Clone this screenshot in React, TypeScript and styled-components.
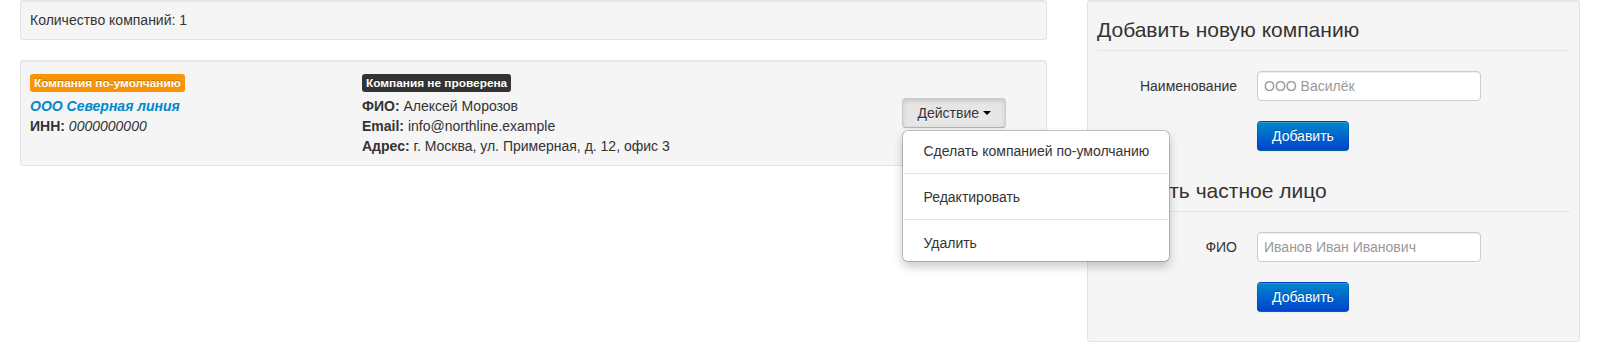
import React from "react";
import styled, { createGlobalStyle, css } from "styled-components";

const GlobalStyle = createGlobalStyle`
  html, body {
    margin: 0;
    padding: 0;
    background: #fff;
  }
  body {
    font-family: "Liberation Sans", Arial, Helvetica, sans-serif;
    font-size: 14px;
    line-height: 20px;
    color: #333;
  }
  * { box-sizing: border-box; }
`;

const Page = styled.div`
  display: flex;
  align-items: flex-start;
  gap: 40px;
  padding: 0 20px;
`;

const MainColumn = styled.div`
  width: 1027px;
  flex-shrink: 0;
`;

const Sidebar = styled.div`
  width: 493px;
  flex-shrink: 0;
`;

const Well = styled.div`
  background: #f5f5f5;
  border: 1px solid #e3e3e3;
  border-radius: 3px;
  padding: 9px;
  margin-bottom: 20px;
  box-shadow: inset 0 1px 1px rgba(0, 0, 0, 0.05);
`;

const CompanyRow = styled.div`
  display: grid;
  grid-template-columns: 332px 1fr auto;
  align-items: start;
`;

const Column = styled.div`
  display: flex;
  flex-direction: column;
`;

const BadgeRow = styled.div`
  display: flex;
  align-items: flex-start;
  height: 26px;
  padding-top: 4px;
`;

const Label = styled.span<{ $tone: "warning" | "inverse" }>`
  display: inline-block;
  padding: 2px 4px;
  font-size: 11.844px;
  font-weight: bold;
  line-height: 14px;
  color: #fff;
  white-space: nowrap;
  border-radius: 3px;
  text-shadow: 0 -1px 0 rgba(0, 0, 0, 0.25);
  background-color: ${(p) => (p.$tone === "warning" ? "#f89406" : "#333333")};
`;

const Line = styled.div`
  line-height: 20px;
  white-space: nowrap;
`;

const CompanyName = styled.a`
  color: #0088cc;
  font-weight: bold;
  font-style: italic;
  text-decoration: none;
`;

const Value = styled.em`
  font-style: italic;
`;

const ActionCell = styled.div`
  align-self: center;
  margin-right: 31px;
`;

const BtnGroup = styled.div`
  position: relative;
  display: inline-block;
`;

const Button = styled.button<{ $variant?: "default" | "primary"; $open?: boolean }>`
  display: inline-block;
  padding: 4px 14px;
  font-family: inherit;
  font-size: 14px;
  line-height: 20px;
  border-radius: 4px;
  cursor: pointer;
  ${(p) =>
    p.$variant === "primary"
      ? css`
          color: #fff;
          text-shadow: 0 -1px 0 rgba(0, 0, 0, 0.25);
          background-color: #006dcc;
          background-image: linear-gradient(to bottom, #0088cc, #0044cc);
          border: 1px solid rgba(0, 0, 0, 0.1);
          border-bottom-color: rgba(0, 0, 0, 0.25);
          box-shadow: inset 0 1px 0 rgba(255, 255, 255, 0.2), 0 1px 2px rgba(0, 0, 0, 0.05);
        `
      : css`
          color: #333;
          text-shadow: 0 1px 1px rgba(255, 255, 255, 0.75);
          border: 1px solid #cccccc;
          border-bottom-color: #b3b3b3;
          background-color: #e6e6e6;
          background-image: ${p.$open ? "none" : "linear-gradient(to bottom, #ffffff, #e6e6e6)"};
          box-shadow: ${p.$open
            ? "inset 0 2px 4px rgba(0, 0, 0, 0.15), 0 1px 2px rgba(0, 0, 0, 0.05)"
            : "inset 0 1px 0 rgba(255, 255, 255, 0.2), 0 1px 2px rgba(0, 0, 0, 0.05)"};
        `}
`;

const Caret = styled.span`
  display: inline-block;
  width: 0;
  height: 0;
  margin-left: 4px;
  vertical-align: middle;
  margin-top: -2px;
  border-top: 4px solid #000;
  border-right: 4px solid transparent;
  border-left: 4px solid transparent;
`;

const Menu = styled.ul`
  position: absolute;
  top: 100%;
  left: 0;
  z-index: 1000;
  min-width: 160px;
  margin: 2px 0 0;
  padding: 7px 0 5px;
  list-style: none;
  background: #fff;
  border: 1px solid rgba(0, 0, 0, 0.2);
  border-radius: 6px;
  box-shadow: 0 5px 10px rgba(0, 0, 0, 0.2);
  background-clip: padding-box;
`;

const MenuItem = styled.li`
  display: block;
  padding: 3px 20px;
  line-height: 20px;
  color: #333;
  white-space: nowrap;
`;

const Divider = styled.li`
  box-sizing: content-box;
  height: 1px;
  margin: 9px 1px;
  overflow: hidden;
  background-color: #e5e5e5;
  border-bottom: 1px solid #fff;
`;

const Fieldset = styled.fieldset`
  border: 0;
  margin: 0;
  padding: 0;
  min-width: 0;
`;

const Legend = styled.legend`
  display: block;
  width: 100%;
  padding: 0;
  margin-bottom: 20px;
  font-size: 21px;
  line-height: 40px;
  color: #333;
  border-bottom: 1px solid #e5e5e5;
`;

const ControlGroup = styled.div<{ $offset?: boolean }>`
  display: flex;
  align-items: flex-start;
  margin-bottom: 20px;
  padding-left: ${(p) => (p.$offset ? "160px" : "0")};
`;

const ControlLabel = styled.label`
  width: 140px;
  margin-right: 20px;
  padding-top: 5px;
  text-align: right;
  color: #333;
`;

const Input = styled.input`
  width: 224px;
  height: 30px;
  padding: 4px 6px;
  font-family: inherit;
  font-size: 14px;
  line-height: 20px;
  color: #555;
  background: #fff;
  border: 1px solid #cccccc;
  border-radius: 4px;
  box-shadow: inset 0 1px 1px rgba(0, 0, 0, 0.075);
  outline: none;
  &::placeholder {
    color: #999;
  }
`;

export default function App() {
  return (
    <>
      <GlobalStyle />
      <Page>
        <MainColumn>
          <Well>Количество компаний: 1</Well>
          <Well>
            <CompanyRow>
              <Column>
                <BadgeRow>
                  <Label $tone="warning">Компания по-умолчанию</Label>
                </BadgeRow>
                <Line>
                  <CompanyName href="#">ООО Северная линия</CompanyName>
                </Line>
                <Line>
                  <b>ИНН:</b> <Value>0000000000</Value>
                </Line>
              </Column>
              <Column>
                <BadgeRow>
                  <Label $tone="inverse">Компания не проверена</Label>
                </BadgeRow>
                <Line>
                  <b>ФИО:</b> Алексей Морозов
                </Line>
                <Line>
                  <b>Email:</b> info@northline.example
                </Line>
                <Line>
                  <b>Адрес:</b> г. Москва, ул. Примерная, д. 12, офис 3
                </Line>
              </Column>
              <ActionCell>
                <BtnGroup>
                  <Button $open>
                    Действие
                    <Caret />
                  </Button>
                  <Menu>
                    <MenuItem>Сделать компанией по-умолчанию</MenuItem>
                    <Divider />
                    <MenuItem>Редактировать</MenuItem>
                    <Divider />
                    <MenuItem>Удалить</MenuItem>
                  </Menu>
                </BtnGroup>
              </ActionCell>
            </CompanyRow>
          </Well>
        </MainColumn>
        <Sidebar>
          <Well>
            <Fieldset>
              <Legend>Добавить новую компанию</Legend>
              <ControlGroup>
                <ControlLabel>Наименование</ControlLabel>
                <Input placeholder="ООО Василёк" />
              </ControlGroup>
              <ControlGroup $offset>
                <Button $variant="primary">Добавить</Button>
              </ControlGroup>
            </Fieldset>
            <Fieldset>
              <Legend>Добавить частное лицо</Legend>
              <ControlGroup>
                <ControlLabel>ФИО</ControlLabel>
                <Input placeholder="Иванов Иван Иванович" />
              </ControlGroup>
              <ControlGroup $offset>
                <Button $variant="primary">Добавить</Button>
              </ControlGroup>
            </Fieldset>
          </Well>
        </Sidebar>
      </Page>
    </>
  );
}
